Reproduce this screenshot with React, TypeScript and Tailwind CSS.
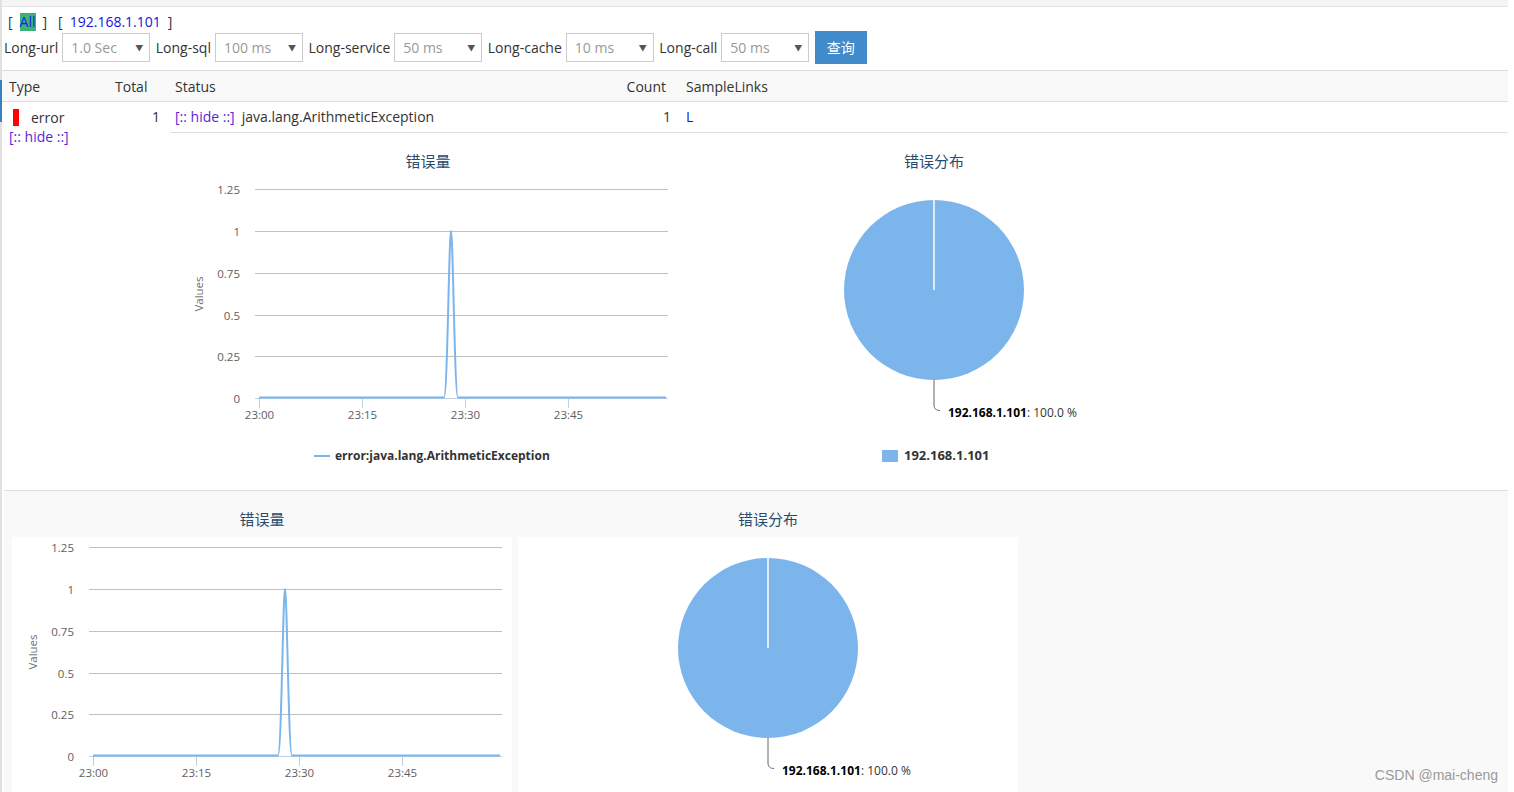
import React from 'react';

const yTicks = [
  { v: '1.25', y: 10.5 },
  { v: '1', y: 52.5 },
  { v: '0.75', y: 94.5 },
  { v: '0.5', y: 136.5 },
  { v: '0.25', y: 177.5 },
  { v: '0', y: 219.5 },
];

const xTicks = [
  { t: '23:00', x: 81.5 },
  { t: '23:15', x: 184.5 },
  { t: '23:30', x: 287.5 },
  { t: '23:45', x: 390.5 },
];

const Title: React.FC<{ text: string }> = ({ text }) => (
  <div className="h-[24px] leading-[24px] text-center text-[15px] text-[#274b6d]">{text}</div>
);

// boxed charts sit in the lower panel, their legend falls below the fold
const LineChart: React.FC<{ boxed?: boolean }> = ({ boxed }) => (
  <div className="w-[500px] shrink-0">
    <Title text="错误量" />
    <svg
      width={500}
      height={300}
      className={`mt-[6px] block ${boxed ? 'bg-white' : ''}`}
    >
      {yTicks.map((t) => (
        <g key={t.v}>
          <line x1={77} x2={490} y1={t.y} y2={t.y} stroke="#c0c0c0" strokeWidth={1} />
          <text x={62} y={t.y + 4} textAnchor="end" fontSize={11.5} fill="#606060">
            {t.v}
          </text>
        </g>
      ))}
      <line x1={77} x2={490} y1={219.5} y2={219.5} stroke="#c0d0e0" strokeWidth={1} />
      {xTicks.map((t) => (
        <g key={t.t}>
          <line x1={t.x} x2={t.x} y1={219} y2={229} stroke="#c0d0e0" strokeWidth={1} />
          <text x={t.x} y={240} textAnchor="middle" fontSize={11.5} fill="#606060">
            {t.t}
          </text>
        </g>
      ))}
      <text
        x={25}
        y={115}
        textAnchor="middle"
        fontSize={11.5}
        fill="#707070"
        transform="rotate(-90 25 115)"
      >
        Values
      </text>
      <path
        d="M81 218.5 L266 218.5 C269.5 218.5 271 52 273 52 C275 52 276.5 218.5 280 218.5 L488 218.5"
        fill="none"
        stroke="#7cb5ec"
        strokeWidth={2}
      />
      {!boxed && (
        <>
          <line x1={136} x2={152} y1={277} y2={277} stroke="#7cb5ec" strokeWidth={2} />
          <text x={157} y={281} fontSize={12} fontWeight={700} fill="#333">
            error:java.lang.ArithmeticException
          </text>
        </>
      )}
    </svg>
  </div>
);

const PieChart: React.FC<{ boxed?: boolean }> = ({ boxed }) => (
  <div className="w-[500px] shrink-0">
    <Title text="错误分布" />
    <svg
      width={500}
      height={300}
      className={`mt-[6px] block ${boxed ? 'bg-white' : ''}`}
    >
      <circle cx={250} cy={111} r={90} fill="#7cb5ec" />
      <line x1={250} x2={250} y1={21} y2={111} stroke="#fff" strokeWidth={1.5} />
      <path d="M250 201 L250 226 C250 229.5 252 231.5 256 231.5" fill="none" stroke="#666" strokeWidth={1} />
      <text x={264} y={238} fontSize={12}>
        <tspan fontWeight={700} fill="#000">192.168.1.101</tspan>
        <tspan fill="#333">: 100.0 %</tspan>
      </text>
      {!boxed && (
        <>
          <rect x={198} y={271} width={16} height={12} fill="#7cb5ec" />
          <text x={220} y={281} fontSize={13} fontWeight={700} fill="#333">
            192.168.1.101
          </text>
        </>
      )}
    </svg>
  </div>
);

const Select: React.FC<{ value: string }> = ({ value }) => (
  <div className="ml-[4px] mr-[5.5px] w-[88px] h-[29px] border border-[#ccc] bg-white flex items-center justify-between pl-[8px] pr-[6px]">
    <span className="text-[#999]">{value}</span>
    <span className="text-[8px] text-[#555]">▼</span>
  </div>
);

const filters = [
  { label: 'Long-url', value: '1.0 Sec' },
  { label: 'Long-sql', value: '100 ms' },
  { label: 'Long-service', value: '50 ms' },
  { label: 'Long-cache', value: '10 ms' },
  { label: 'Long-call', value: '50 ms' },
];

export default function App() {
  return (
    <div className="relative h-[792px] overflow-hidden bg-white font-['Open_Sans','Noto_Sans_CJK_SC',sans-serif] text-[14px] text-[#333]">
      <div className="relative w-[1508px] h-full border-l-2 border-[#e0e0e0]">
        <div className="absolute left-[-2px] top-[80px] w-[2px] h-[42px] bg-[#3c7fc0]" />
        <div className="h-[7px] bg-[#f5f5f5] border-b border-[#e5e5e5]" />

        <div className="mt-[6px] h-[18px] leading-[18px] flex items-center pl-[6px]">
          <span>[</span>
          <span className="ml-[7px] bg-[#3cb371] text-[#1a1aff]">All</span>
          <span className="ml-[7px]">]</span>
          <span className="ml-[11px]">[</span>
          <span className="ml-[7px] text-[#1515d9]">192.168.1.101</span>
          <span className="ml-[7px]">]</span>
        </div>

        <div className="h-[33px] flex items-center pl-[2px]">
          {filters.map((f) => (
            <React.Fragment key={f.label}>
              <span>{f.label}</span>
              <Select value={f.value} />
            </React.Fragment>
          ))}
          <button className="h-[33px] w-[52px] bg-[#428bca] text-white text-[14px]">查询</button>
        </div>

        <div className="mt-[6px] h-[32px] border-y border-[#ddd] bg-[#f9f9f9] flex items-center">
          <div className="w-[105px] pl-[7px]">Type</div>
          <div className="w-[63px] pl-[8px]">Total</div>
          <div className="w-[440px] pl-[5px]">Status</div>
          <div className="w-[66px] text-right pr-[10px]">Count</div>
          <div className="pl-[10px]">SampleLinks</div>
        </div>

        <div className="flex">
          <div className="w-[168px] shrink-0 flex pt-[5px]">
            <div className="w-[105px] pl-[7px]">
              <div className="h-[20px] flex items-center">
                <span className="ml-[4px] w-[6px] h-[17px] bg-[#ff0000]" />
                <span className="ml-[12px]">error</span>
              </div>
              <div className="h-[20px] leading-[20px] text-[#5b1fd6]">[:: hide ::]</div>
            </div>
            <div className="w-[63px] text-right pr-[10px] leading-[20px]">1</div>
          </div>
          <div className="flex-1">
            <div className="h-[31px] border-b border-[#ddd] flex items-center pb-[1px]">
              <div className="w-[440px] pl-[5px]">
                <span className="text-[#5b1fd6]">[:: hide ::]</span>
                <span className="ml-[7px]">java.lang.ArithmeticException</span>
              </div>
              <div className="w-[66px] text-right pr-[5px]">1</div>
              <div className="pl-[10px] text-[#1515d9]">L</div>
            </div>
            <div className="flex gap-[6px] pl-[8px] pt-[16px]">
              <LineChart />
              <PieChart />
            </div>
          </div>
        </div>

        <div className="mt-[11px] ml-[2px] h-full border-t border-[#ddd] bg-[#f9f9f9] pt-[16px] pl-[8px] flex gap-[6px]">
          <LineChart boxed />
          <PieChart boxed />
        </div>
      </div>
      <div className="absolute right-[16px] bottom-[6px] font-['Liberation_Sans',sans-serif] text-[14px] text-[#9a9a9a]">
        CSDN @mai-cheng
      </div>
    </div>
  );
}
